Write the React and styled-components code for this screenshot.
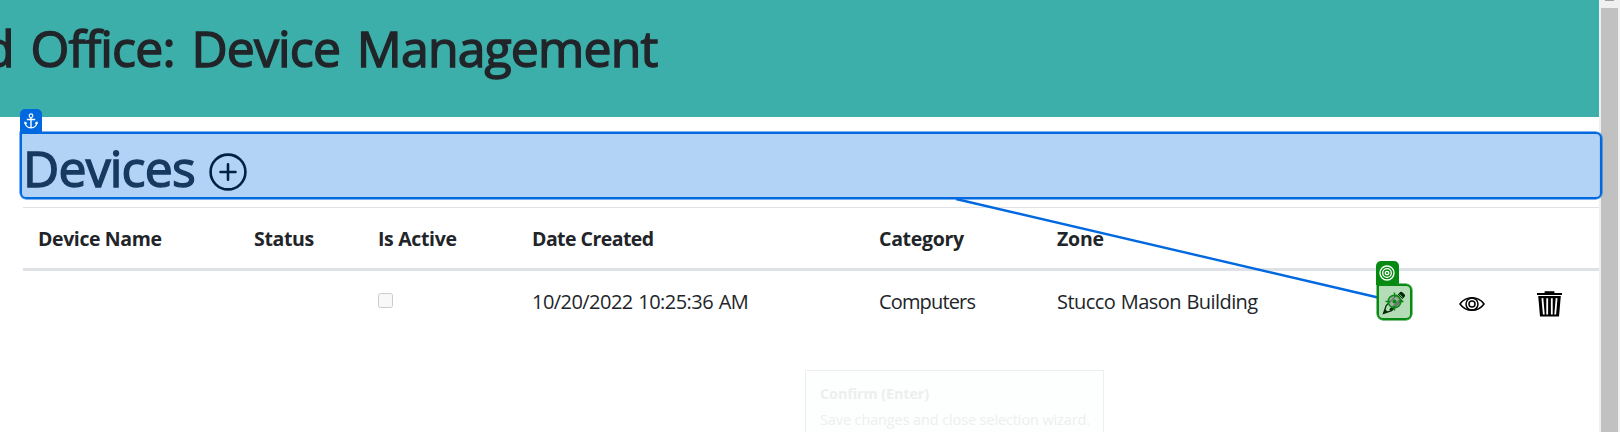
import React from "react";
import styled, { createGlobalStyle } from "styled-components";

const Global = createGlobalStyle`
  * { box-sizing: border-box; }
  body { margin: 0; background: #fff; color: #212529; font-family: "Open Sans", "Noto Sans", sans-serif; overflow: hidden; }
`;
const Shell = styled.div`
  display: flex;
  height: 432px;
  position: relative;
  overflow: hidden;
`;
const Main = styled.main`
  width: 1599px;
  display: flex;
  flex-direction: column;
`;
const Banner = styled.header`
  height: 117px;
  padding-top: 14px;
  background: #3cafaa;
  display: flex;
  justify-content: flex-start;
`;
const Title = styled.h1`
  margin: 0;
  font-size: 50px;
  line-height: 68px;
  font-weight: 500;
  letter-spacing: ${(p) => p.$track}px;
  word-spacing: 4.6px;
  -webkit-text-stroke: 1.4px currentColor;
  margin-left: ${(p) => p.$shift || 0}px;
  white-space: pre;
`;
const Section = styled.section`
  padding: 14px 0 0 23px;
`;
const Heading = styled.div`
  height: 76px;
  padding-top: 3px;
  display: flex;
  align-items: flex-start;
  gap: 14px;
  svg { margin-top: 19px; }
`;
const Row = styled.div`
  display: grid;
  grid-template-columns: 216px 124px 154px 347px 178px 320px 82px 78px 1fr;
  padding-left: 15px;
  height: ${(p) => (p.$head ? 64 : 66)}px;
  ${(p) => p.$head && "border-top: 1px solid #dee2e6; border-bottom: 3px solid #dee2e6;"}
`;
const Cell = styled.div`
  font-size: ${(p) => (p.$head ? 19.5 : 20)}px;
  font-weight: ${(p) => (p.$head ? 700 : 400)};
  letter-spacing: ${(p) => p.$track || 0}px;
  word-spacing: ${(p) => (p.$head ? 0 : 1)}px;
  line-height: 28px;
  padding-top: 17px;
  white-space: nowrap;
`;
const Check = styled.span`
  display: block;
  width: 15px;
  height: 15px;
  margin-top: 5px;
  border: 1px solid #cbcbcb;
  border-radius: 2.5px;
  background: #f8f8f8;
`;
const Glyph = styled.svg`
  display: block;
  flex: none;
  overflow: visible;
`;
const Scrollbar = styled.aside`
  flex: 1;
  background: #f0f0f0;
  padding: 0 2px;
  display: flex;
  flex-direction: column;
  align-items: center;
`;
const Arrow = styled.span`
  width: 9px;
  height: 1px;
  background: #a0a0a0;
  margin-bottom: 7px;
`;
const Thumb = styled.span`
  width: 17px;
  flex: 1;
  background: #c1c1c1;
`;
const Selection = styled.div`
  position: absolute;
  left: ${(p) => p.$x}px;
  top: ${(p) => p.$y}px;
  width: ${(p) => p.$w}px;
  height: ${(p) => p.$h}px;
  border: 2px solid ${(p) => p.$color};
  border-radius: 0 6px 6px 6px;
  background: ${(p) => p.$fill};
  box-shadow: 0 0 0 0.5px ${(p) => p.$color};
`;
const Tag = styled.div`
  position: absolute;
  left: ${(p) => p.$x}px;
  top: ${(p) => p.$y}px;
  width: 22.5px;
  height: 24px;
  border-radius: 5px 5px 0 0;
  background: ${(p) => p.$color};
  display: flex;
  align-items: center;
  justify-content: center;
`;
const Connector = styled.svg`
  position: absolute;
  inset: 0;
  pointer-events: none;
`;
const Hint = styled.div`
  position: absolute;
  left: 805px;
  top: 370px;
  width: 299px;
  height: 90px;
  border: 1px solid #eeeeef;
  background: #fcfffe;
  color: #eeeeef;
  padding: 10px 14px;
  font-size: 14.5px;
  line-height: 26px;
  white-space: nowrap;
`;
const HintTitle = styled.div`
  font-weight: 700;
  letter-spacing: -0.15px;
`;
const HintText = styled.div`
  letter-spacing: -0.12px;
`;

const BLUE = "#0069e0";
const GREEN = "#078a12";

const PlusIcon = () => (
  <Glyph width="38" height="38" viewBox="-19 -19 38 38" fill="none" stroke="#000" strokeWidth="2.6" strokeLinecap="round">
    <circle r="17.4" />
    <path d="M-7.5 0H7.5M0-7.7V7.7" />
  </Glyph>
);
const AnchorIcon = () => (
  <Glyph width="14" height="16" viewBox="0 0 14 16" fill="none" stroke="#fff" strokeWidth="1.2">
    <circle cx="7" cy="2.7" r="1.8" />
    <path d="M7 4.5V15M2.8 6.5H11.2" strokeWidth="1.4" />
    <path d="M1 9.2C1.4 12.8 3.8 14.8 7 14.9C10.2 14.8 12.6 12.8 13 9.2M.4 10.8L1.1 9.2L2.9 10.5M13.6 10.8L12.9 9.2L11.1 10.5" />
  </Glyph>
);
const TargetIcon = () => (
  <Glyph width="16" height="16" viewBox="-8 -8 16 16" fill="none" stroke="#fff" strokeWidth="1.3">
    <circle r="7" />
    <circle r="4.3" />
    <circle r="1.7" />
  </Glyph>
);
const PencilIcon = () => (
  <Glyph width="24" height="24" viewBox="0 0 24 24">
    <path d="M1.5 22.5L4.2 14.5L14.5 4.5L19.6 9.7L9.5 19.7Z" fill="none" stroke="#000" strokeWidth="1.3" />
    <path d="M1.5 22.5L3 18L6 21ZM15.8 3.4L18.3 1.1Q19.5.3 20.6 1.4L22.7 3.6Q23.6 4.7 22.6 5.8L20.5 8.1Z" fill="#000" />
    <path d="M8 19L18 9" stroke="#000" strokeWidth="2" />
    <path d="M17.5 3.3L20.5 6.5" stroke="#ccc" strokeWidth="1" />
  </Glyph>
);
const EyeIcon = () => (
  <Glyph width="26" height="16" viewBox="0 0 26 16" fill="none" stroke="#000" strokeWidth="1.5">
    <path d="M1 8C6.8-.4 19.2-.4 25 8C19.2 16.4 6.8 16.4 1 8Z" />
    <circle cx="13" cy="8" r="6" />
    <circle cx="13" cy="8" r="3" />
  </Glyph>
);
const TrashIcon = () => (
  <Glyph width="25" height="26" viewBox="0 0 25 26">
    <path d="M0 3H25" stroke="#000" strokeWidth="2" />
    <path d="M8.5 3V1.2H16.5V3" fill="none" stroke="#000" strokeWidth="1.8" />
    <path d="M1.2 5H23.8L22 25.5H3Z" fill="#000" />
    <path d="M5.4 7.2L6.8 23.5M10.2 7.2V23.5M14.8 7.2V23.5M19.6 7.2L18.2 23.5" stroke="#fff" strokeWidth="1.8" />
  </Glyph>
);

const IconCell = styled.div`
  padding-top: ${(p) => p.$top}px;
  padding-left: ${(p) => p.$left}px;
`;

const columns = [
  ["Device Name", -0.4],
  ["Status", -0.35],
  ["Is Active", -0.35],
  ["Date Created", -0.55],
  ["Category", -0.3],
  ["Zone", -0.2],
];

export default function App() {
  return (
    <Shell>
      <Global />
      <Main>
        <Banner><Title $track={-0.87} $shift={-16}>d Office: Device Management</Title></Banner>
        <Section>
          <Heading><Title $track={-0.85}>Devices</Title><PlusIcon /></Heading>
          <Row $head>
            {columns.map(([name, track]) => <Cell key={name} $head $track={track}>{name}</Cell>)}
          </Row>
          <Row>
            <Cell />
            <Cell />
            <Cell><Check /></Cell>
            <Cell $track={-0.55}>10/20/2022 10:25:36 AM</Cell>
            <Cell $track={-0.85}>Computers</Cell>
            <Cell $track={-0.57}>Stucco Mason Building</Cell>
            <IconCell $top={20} $left={5}><PencilIcon /></IconCell>
            <IconCell $top={24.5} $left={-1}><EyeIcon /></IconCell>
            <IconCell $top={20} $left={0}><TrashIcon /></IconCell>
          </Row>
        </Section>
      </Main>
      <Scrollbar><Arrow /><Thumb /></Scrollbar>
      <Hint>
        <HintTitle>Confirm (Enter)</HintTitle>
        <HintText>Save changes and close selection wizard.</HintText>
      </Hint>
      <Connector width="1620" height="432" fill="none">
        <path d="M956 199L1378 297.5" stroke={BLUE} strokeWidth="2.4" />
      </Connector>
      <Selection $x={20} $y={132} $w={1582} $h={67} $color={BLUE} $fill="rgba(0,105,224,.3)" />
      <Tag $x={19.5} $y={108.5} $color={BLUE}><AnchorIcon /></Tag>
      <Selection $x={1377} $y={284} $w={35} $h={36} $color={GREEN} $fill="rgba(7,138,18,.3)" />
      <Tag $x={1376.2} $y={260.5} $color={GREEN}><TargetIcon /></Tag>
      <Connector width="1620" height="432" fill="none" stroke={GREEN}>
        <circle cx="1394.5" cy="301.5" r="6.3" strokeWidth="1.6" fill="#8d9c8d" fillOpacity=".7" />
        <circle cx="1394.5" cy="301.5" r="2" fill={GREEN} stroke="none" />
        <path d="M1394.5 292.5V297M1394.5 306V310.5M1385.5 301.5H1390M1399 301.5H1403.5" strokeWidth="1.4" />
      </Connector>
    </Shell>
  );
}
